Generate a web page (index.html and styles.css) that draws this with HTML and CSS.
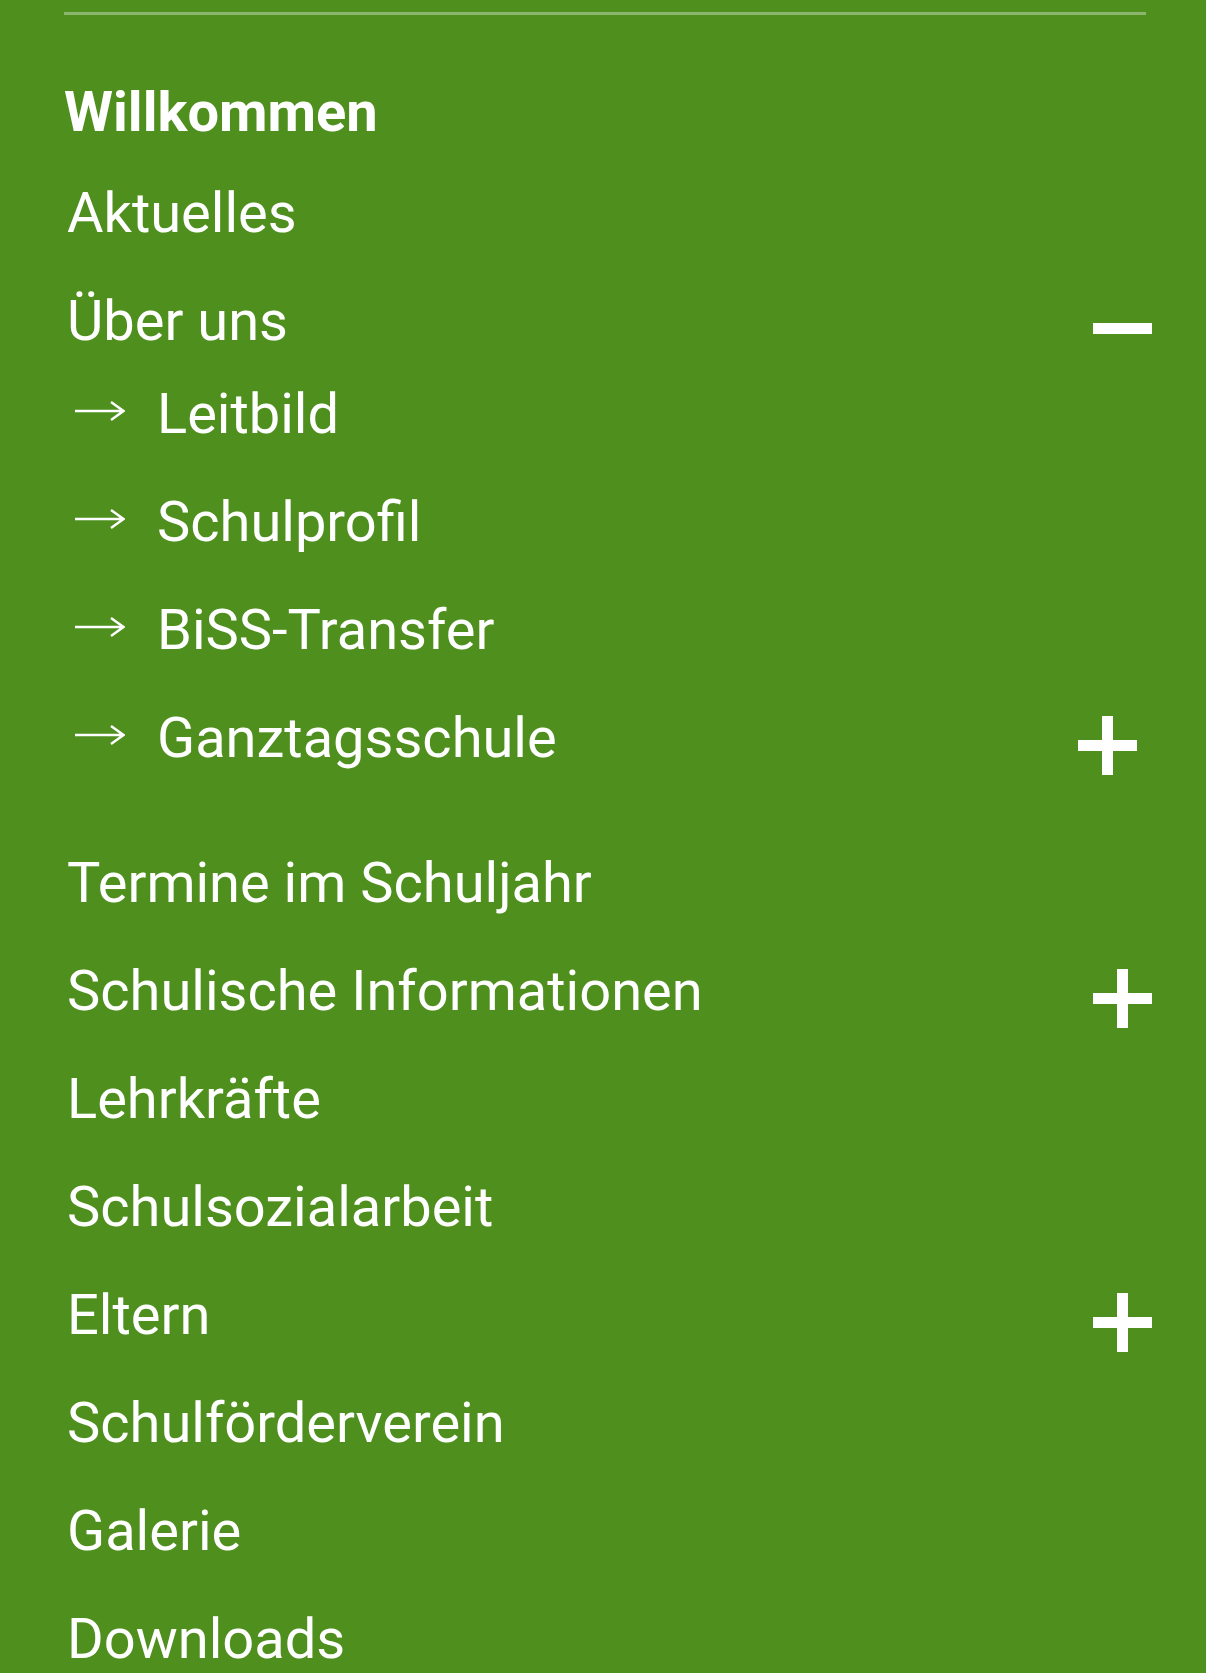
FILE: index.html
```html
<!DOCTYPE html>
<html>
    <head>
        <title>Menü</title>
        <meta charset="utf-8">
        <link rel="stylesheet" href="styles.css">
    </head>
    <body>
        <nav class="menu">
            <hr class="menu-rule">

            <ul class="menu-list">
                <li class="menu-item active"><a href="#">Willkommen</a></li>
                <li class="menu-item"><a href="#">Aktuelles</a></li>
                <li class="menu-item open">
                    <div class="menu-row">
                        <a href="#">Über uns</a>
                        <button class="toggle minus" aria-label="Zuklappen"></button>
                    </div>
                    <ul class="sub-list">
                        <li class="sub-item">
                            <svg class="arrow" width="50" height="22" viewBox="0 0 50 22"><path d="M0 11H48M36 2L48.5 11L36 20" fill="none" stroke="#fff" stroke-width="2.4"/></svg>
                            <a href="#">Leitbild</a>
                        </li>
                        <li class="sub-item">
                            <svg class="arrow" width="50" height="22" viewBox="0 0 50 22"><path d="M0 11H48M36 2L48.5 11L36 20" fill="none" stroke="#fff" stroke-width="2.4"/></svg>
                            <a href="#">Schulprofil</a>
                        </li>
                        <li class="sub-item">
                            <svg class="arrow" width="50" height="22" viewBox="0 0 50 22"><path d="M0 11H48M36 2L48.5 11L36 20" fill="none" stroke="#fff" stroke-width="2.4"/></svg>
                            <a href="#">BiSS-Transfer</a>
                        </li>
                        <li class="sub-item">
                            <svg class="arrow" width="50" height="22" viewBox="0 0 50 22"><path d="M0 11H48M36 2L48.5 11L36 20" fill="none" stroke="#fff" stroke-width="2.4"/></svg>
                            <a href="#">Ganztagsschule</a>
                            <button class="toggle plus" aria-label="Aufklappen"></button>
                        </li>
                    </ul>
                </li>
                <li class="menu-item"><a href="#">Termine im Schuljahr</a></li>
                <li class="menu-item">
                    <div class="menu-row">
                        <a href="#">Schulische Informationen</a>
                        <button class="toggle plus" aria-label="Aufklappen"></button>
                    </div>
                </li>
                <li class="menu-item"><a href="#">Lehrkräfte</a></li>
                <li class="menu-item"><a href="#">Schulsozialarbeit</a></li>
                <li class="menu-item">
                    <div class="menu-row">
                        <a href="#">Eltern</a>
                        <button class="toggle plus" aria-label="Aufklappen"></button>
                    </div>
                </li>
                <li class="menu-item"><a href="#">Schulförderverein</a></li>
                <li class="menu-item"><a href="#">Galerie</a></li>
                <li class="menu-item"><a href="#">Downloads</a></li>
            </ul>
        </nav>
    </body>
</html>
```

FILE: styles.css
```css
html, body {margin: 0px; padding: 0px; background: #4e8f1e;}
body {font-family: Roboto, "Noto Sans", sans-serif; color: #fff; overflow: hidden;}

.menu {padding: 12px 54px 0px 64px;}
.menu-rule {margin: 0px 6px 0px 0px; height: 3px; border: 0px; background: #8cb66d;}

.menu-list {list-style: none; margin: 43px 0px 0px 0px; padding: 0px;}
.menu-item a {display: block; padding: 22px 0px 22px 3px; font-size: 56px; line-height: 64px; color: #fff; text-decoration: none;}
.menu-item.active a {font-weight: 700; padding-left: 0px; padding-bottom: 15px;}

.menu-row {display: flex; justify-content: space-between; align-items: center;}
.menu-row a {flex: 1;}

.toggle {position: relative; width: 59px; height: 59px; margin-top: 15px; padding: 0px; border: 0px; background: none; flex: none;}
.toggle::before {content: ""; position: absolute; left: 0px; top: 24px; width: 59px; height: 11px; background: #fff;}
.toggle.plus::after {content: ""; position: absolute; left: 24px; top: 0px; width: 11px; height: 59px; background: #fff;}

.sub-list {list-style: none; margin: -15px 15px 0px 0px; padding: 0px 0px 37px 0px;}
.sub-item {display: flex; align-items: center;}
.sub-item .arrow {flex: none; margin: 0px 29px 6px 11px;}
.sub-item a {flex: 1; padding-left: 3px;}
```
